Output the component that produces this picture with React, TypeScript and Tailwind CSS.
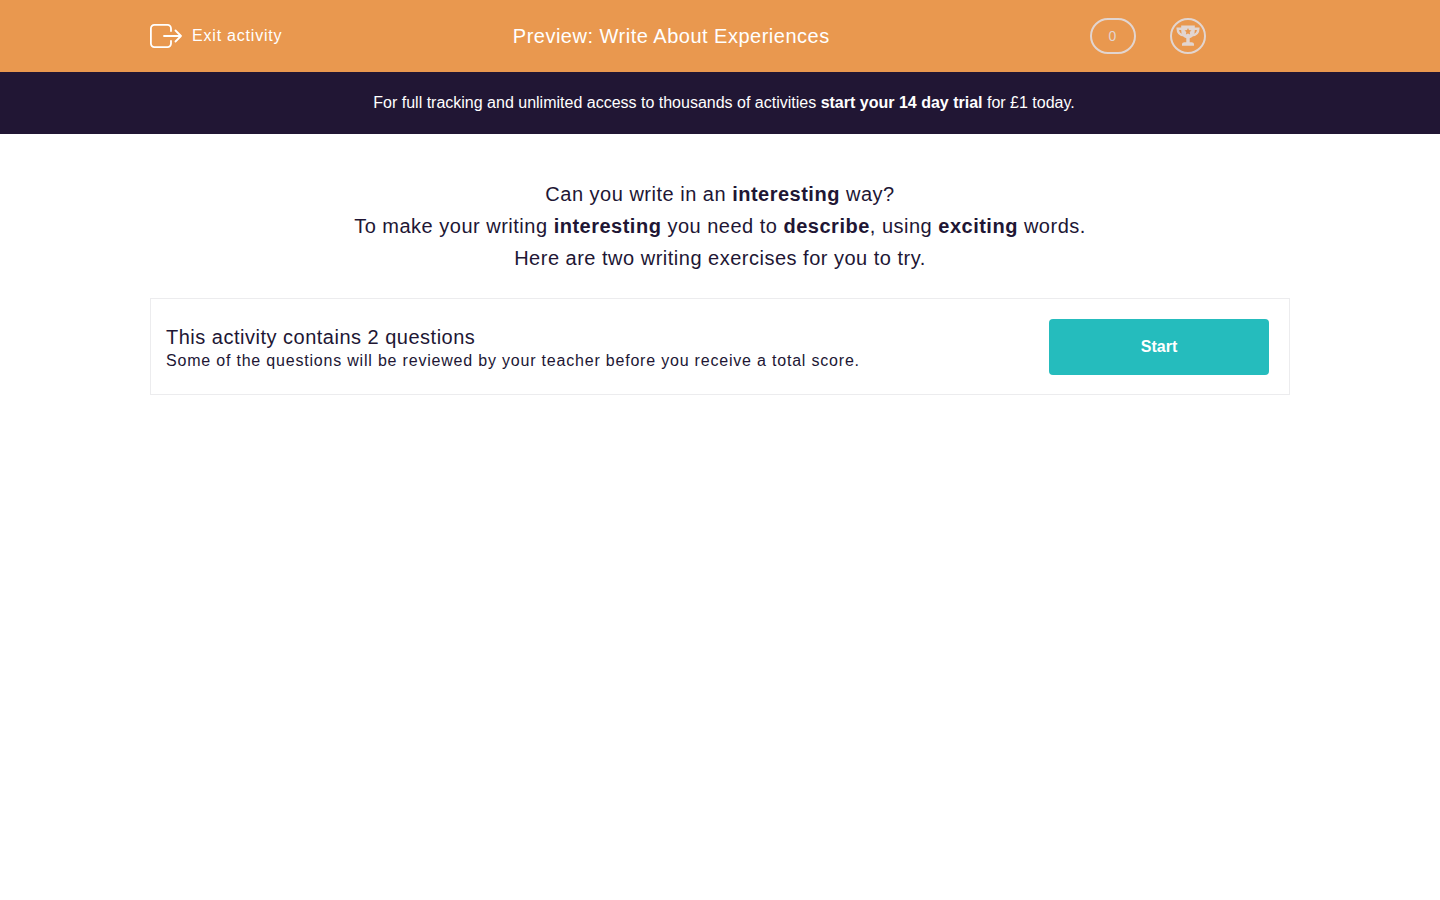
// Activity preview page: header bar, trial banner, intro copy and the start card.

function ExitIcon() {
  return (
    <svg
      className="h-6 w-8 shrink-0"
      viewBox="0 0 32 24"
      fill="none"
      stroke="currentColor"
      strokeWidth="1.8"
      strokeLinecap="round"
      strokeLinejoin="round"
      aria-hidden="true"
    >
      <path d="M21 7V4.400A3.500 3.500 0 0 0 17.500 .9H4.400A3.500 3.500 0 0 0 .9 4.400v15.200a3.500 3.500 0 0 0 3.500 3.500h13.100a3.500 3.500 0 0 0 3.500-3.500V17" />
      <path d="M14 12h17M25.500 6.500l5.500 5.500-5.500 5.500" />
    </svg>
  );
}

function TrophyIcon() {
  return (
    <svg className="size-6 shrink-0" viewBox="0 0 24 24" fill="none" aria-hidden="true">
      <path stroke="currentColor" strokeWidth="2.4" d="M6.500 4.800H1.700c0 3.800 2.300 6.400 6.800 6.400M17.500 4.800h4.800c0 3.800-2.300 6.400-6.800 6.400" />
      <path
        fill="currentColor"
        fillRule="evenodd"
        d="M5.200 1.500h13.600v5c0 4-2 6.700-5.100 7.700v4h1.800c1.500 0 2.500.8 2.500 2.100v1.400H6v-1.400c0-1.300 1-2.100 2.500-2.100h1.800v-4c-3.100-1-5.100-3.700-5.100-7.700zM12 3.900l-1 2.200-2.500.3 1.800 1.700-.4 2.500L12 9.400l2.100 1.200-.4-2.500 1.800-1.700-2.500-.3z"
      />
    </svg>
  );
}

export default function App() {
  return (
    <div className="min-h-screen bg-white font-['Liberation_Sans',Arial,sans-serif] text-[#211634]">
      {/* Header */}
      <header className="bg-[#e9984f] text-white">
        <div className="mx-auto grid h-18 max-w-[1170px] grid-cols-12 items-center">
          <div className="col-span-3 flex pl-[15px]">
            <a href="#exit" className="flex items-center gap-[10px] text-base tracking-wider">
              <ExitIcon />
              Exit activity
            </a>
          </div>
          <h1 className="col-span-5 text-center text-xl tracking-wide">
            Preview: Write About Experiences
          </h1>
          <div className="col-span-3 flex items-center justify-end gap-[34px] pr-0.5 text-[#e2d5d0]">
            <span className="flex h-9 w-[46px] items-center justify-center rounded-full border-2 border-current text-sm">
              0
            </span>
            <span className="flex size-9 items-center justify-center rounded-full border-2 border-current">
              <TrophyIcon />
            </span>
          </div>
        </div>
      </header>

      {/* Trial banner */}
      <p className="bg-[#211634] py-[19px] pr-4 pl-6 text-center text-base text-white">
        For full tracking and unlimited access to thousands of activities{" "}
        <a href="#trial" className="font-bold">
          start your 14 day trial
        </a>{" "}
        for £1 today.
      </p>

      <main className="mx-auto max-w-[1170px] px-[15px] pt-11">
        <div className="text-center text-xl leading-8 tracking-wide">
          <p>
            Can you write in an <strong>interesting</strong> way?
          </p>
          <p>
            To make your writing <strong>interesting</strong> you need to{" "}
            <strong>describe</strong>, using <strong>exciting</strong> words.
          </p>
          <p>Here are two writing exercises for you to try.</p>
        </div>

        {/* Start card */}
        <section className="mt-6 flex items-center justify-between gap-6 border border-[#ececee] pt-5 pr-5 pb-[19px] pl-[15px]">
          <div className="pt-1">
            <h2 className="text-xl leading-6 tracking-wide">This activity contains 2 questions</h2>
            <p className="text-base tracking-wider">
              Some of the questions will be reviewed by your teacher before you receive a total score.
            </p>
          </div>
          <button
            type="button"
            className="h-14 w-[220px] shrink-0 rounded bg-[#25bcbd] text-base font-bold text-white"
          >
            Start
          </button>
        </section>
      </main>
    </div>
  );
}
